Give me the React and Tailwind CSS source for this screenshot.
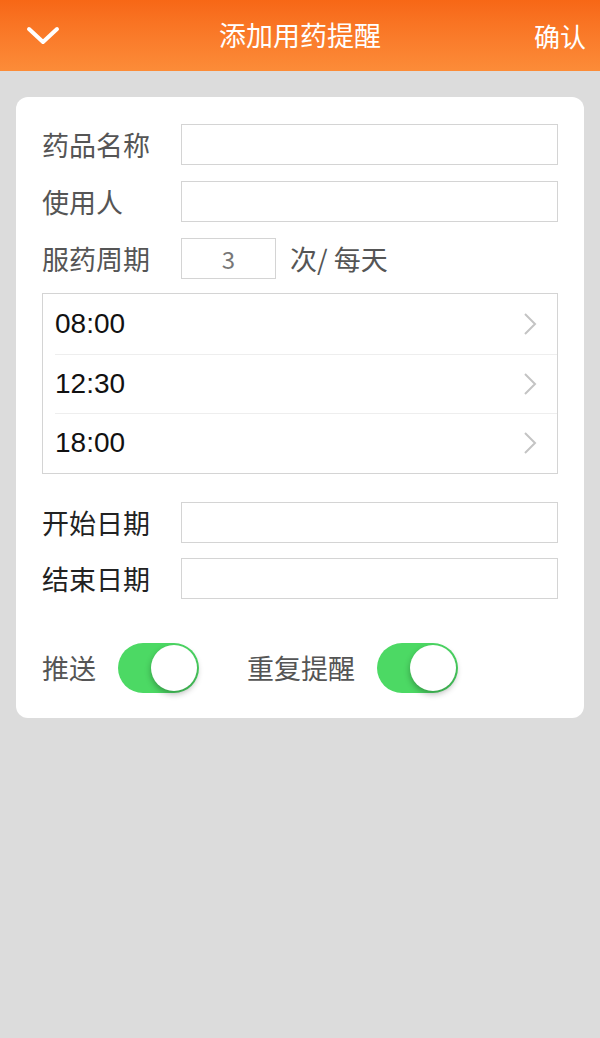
const Field = ({ label, dark }) => (
  <div className="flex items-center h-[41px]">
    <span className={`w-[139px] text-[27px] leading-none ${dark ? "text-[#222]" : "text-[#555]"}`}>{label}</span>
    <div className="flex-1 h-[41px] border border-[#d4d4d4] bg-white"></div>
  </div>
);

const Toggle = () => (
  <div className="relative w-[81px] h-[50px] rounded-full bg-[#4cd964]">
    <div className="absolute right-[2px] top-[2px] w-[46px] h-[46px] rounded-full bg-white shadow-[0_3px_6px_rgba(0,0,0,0.3)]"></div>
  </div>
);

export default function App() {
  const times = ["08:00", "12:30", "18:00"];
  return (
    <div
      className="w-[600px] h-[1038px] bg-[#dcdcdc]"
      style={{ fontFamily: '"Noto Sans CJK SC", "Noto Sans", sans-serif' }}
    >
      <div className="h-[71px] bg-gradient-to-b from-[#f76716] to-[#fc8c38] flex items-center justify-between pl-[26px] pr-[14px] text-white">
        <svg width="34" height="20" viewBox="0 0 34 20" fill="none">
          <path d="M3 3 L17 16 L31 3" stroke="white" strokeWidth="4" strokeLinecap="round" strokeLinejoin="round" />
        </svg>
        <span className="text-[27px] ml-[6px]">添加用药提醒</span>
        <span className="text-[26px]">确认</span>
      </div>

      <div className="mx-[16px] mt-[26px] bg-white rounded-[12px] px-[26px] pt-[27px] pb-[25px]">
        <div className="flex flex-col gap-[16px]">
          <Field label="药品名称" />
          <Field label="使用人" />
          <div className="flex items-center h-[41px]">
            <span className="w-[139px] text-[27px] leading-none text-[#555]">服药周期</span>
            <div className="w-[95px] h-[41px] border border-[#d4d4d4] flex items-center justify-center text-[24px] text-[#777]">3</div>
            <span className="ml-[14px] text-[27px] leading-none text-[#555]">次/ 每天</span>
          </div>
        </div>

        <div className="mt-[14px] border border-[#d4d4d4]">
          {times.map((t, i) => (
            <div key={t} className={`ml-[12px] h-[59.5px] flex items-center justify-between pr-[20px] ${i > 0 ? "border-t border-[#eeeeee]" : ""}`}>
              <span className="text-[28px] text-[#111]" style={{ fontFamily: '"Liberation Sans", sans-serif' }}>{t}</span>
              <svg width="14" height="24" viewBox="0 0 14 24" fill="none">
                <path d="M2 2 L12 12 L2 22" stroke="#c4c4c4" strokeWidth="2" />
              </svg>
            </div>
          ))}
        </div>

        <div className="mt-[28px] flex flex-col gap-[15px]">
          <Field label="开始日期" dark />
          <Field label="结束日期" dark />
        </div>

        <div className="mt-[44px] flex items-center">
          <span className="w-[76px] text-[27px] leading-none text-[#555]">推送</span>
          <Toggle />
          <span className="ml-[48px] w-[130px] text-[27px] leading-none text-[#555]">重复提醒</span>
          <Toggle />
        </div>
      </div>
    </div>
  );
}
